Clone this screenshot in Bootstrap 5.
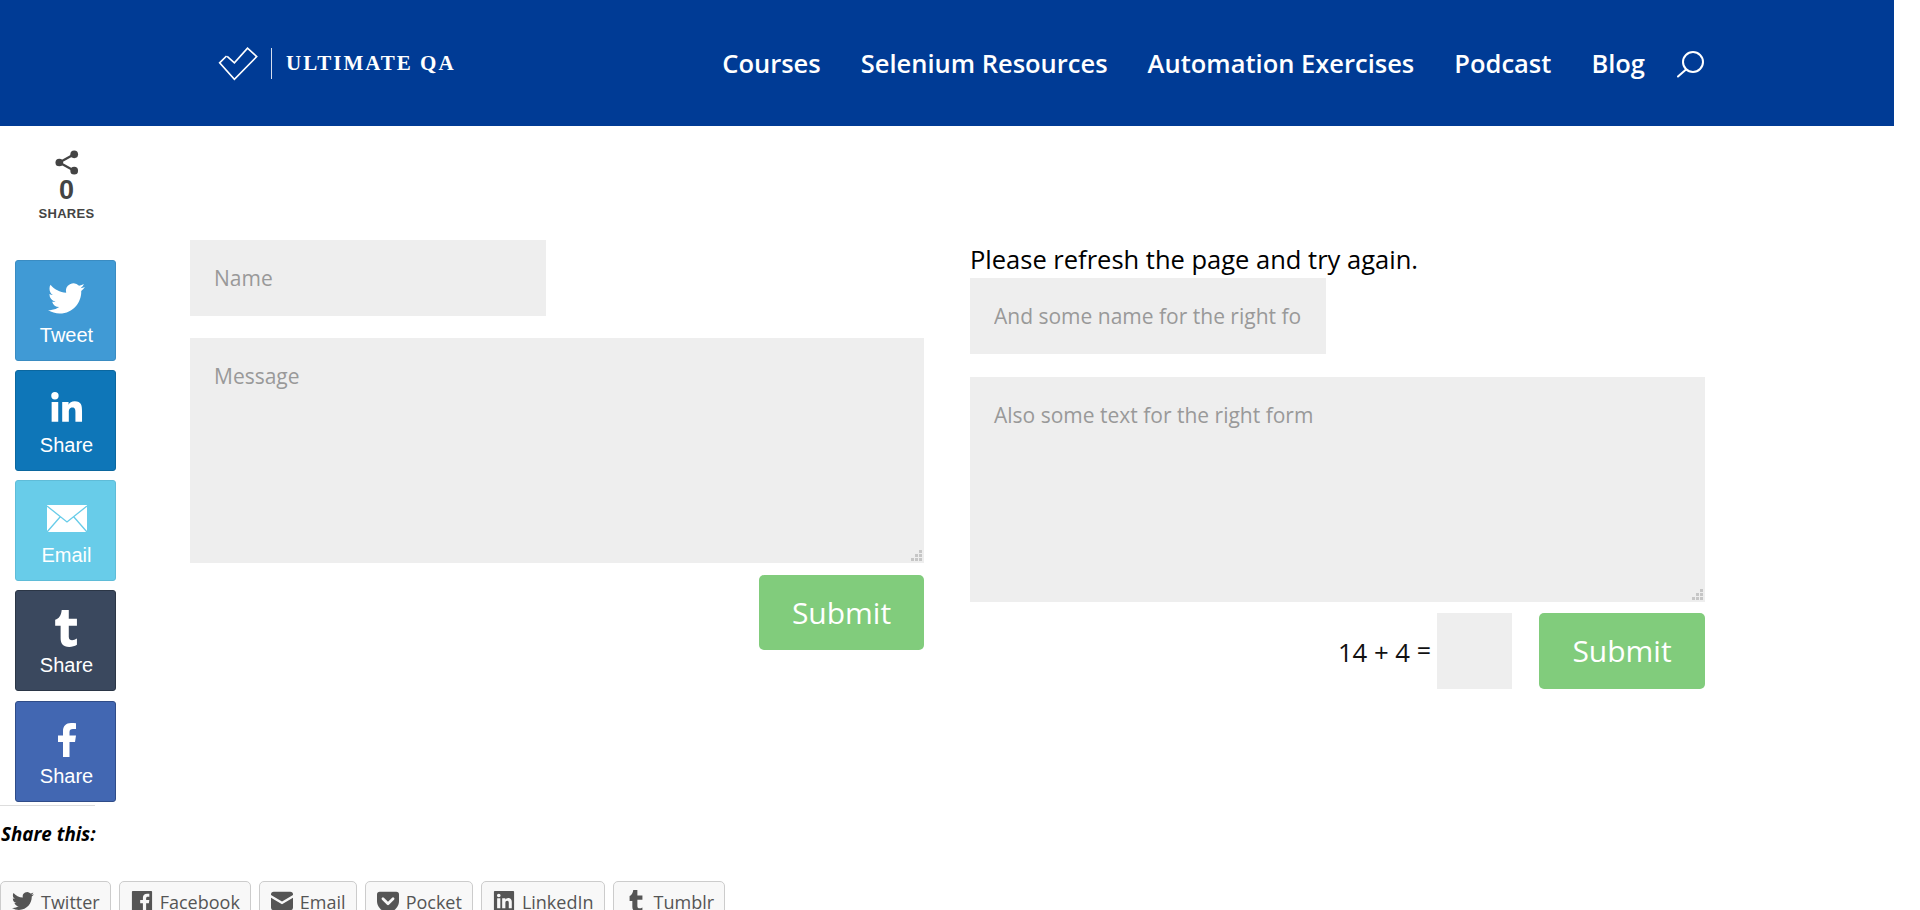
<!DOCTYPE html>
<html lang="en">
<head>
    <meta charset="UTF-8">
    <meta content="width=device-width, initial-scale=1.0" name="viewport">
    <title>Ultimate QA</title>
    <link href="https://cdn.jsdelivr.net/npm/bootstrap@5.3.0/dist/css/bootstrap.min.css" rel="stylesheet">
    <style>
        html, body {
            height: 910px;
            overflow: hidden;
        }
        body {
            background: #fff;
            font-family: "Open Sans", sans-serif;
            color: #000;
        }
        .page-wrap {
            width: 1894px;
        }
        .top-bar {
            height: 126px;
            background: #003b95;
            padding: 0 189px 0 218px;
        }
        .brand-box {
            color: #fff;
            text-decoration: none;
        }
        .brand-rule {
            width: 1px;
            height: 31px;
            background: #d5deee;
            margin: 0 14px 0 13px;
        }
        .brand-name {
            font-family: "Liberation Serif", serif;
            font-weight: 700;
            font-size: 21px;
            letter-spacing: 2px;
            line-height: 1;
        }
        .top-links {
            gap: 40px;
        }
        .top-links a {
            color: #fff;
            font-size: 25.5px;
            font-weight: 600;
            text-decoration: none;
            line-height: 1;
            padding-top: 2px;
        }
        .top-links a.search-link {
            margin-left: -8px;
            padding-top: 0;
        }
        .main-area {
            height: 676px;
        }
        .share-side {
            width: 117px;
            flex: none;
            padding: 24px 0 0 15px;
        }
        .share-total {
            width: 101px;
            height: 110px;
            padding-left: 2px;
            font-family: "Liberation Sans", sans-serif;
            color: #444;
            text-align: center;
            line-height: 1;
        }
        .share-total b {
            display: block;
            font-size: 27px;
            margin-top: 2px;
        }
        .share-total span {
            display: block;
            font-size: 13px;
            font-weight: 700;
            letter-spacing: .3px;
            margin-top: 3px;
        }
        .side-btn {
            width: 101px;
            height: 101px;
            margin-bottom: 9.15px;
            border: 1px solid;
            border-radius: 3px;
            color: #fff;
            font-family: "Liberation Sans", sans-serif;
            font-size: 20px;
            line-height: 1;
            padding: 19px 0 0 2px;
            text-decoration: none;
        }
        .side-btn svg {
            display: block;
            height: 37px;
            margin-bottom: 8px;
        }
        .tw-btn { background: #409ad5; border-color: #3a8cc2; }
        .li-btn { background: #0e76b8; border-color: #0b679f; }
        .em-btn { background: #68cce9; border-color: #5fbcd8; }
        .tu-btn { background: #3a485e; border-color: #2b3646; }
        .fb-btn { background: #4267b2; border-color: #2f4c88; }
        .forms-area {
            padding-left: 73px;
            padding-top: 114px;
            gap: 46px;
        }
        .form-col {
            width: 734px;
        }
        .form-col + .form-col {
            width: 735px;
        }
        .note-line {
            font-size: 25.5px;
            line-height: 38px;
            height: 38px;
            white-space: nowrap;
        }
        .field-short, .field-long, .field-code {
            background: #eee;
            border: 0;
            border-radius: 0;
            color: #999;
            font-size: 21px;
            outline: 0;
            display: block;
        }
        .field-short {
            width: 356px;
            height: 76px;
            padding: 0 24px;
            margin-bottom: 22px;
        }
        .note-line + .field-short {
            margin-bottom: 23px;
        }
        .field-long {
            width: 100%;
            height: 225px;
            padding: 23px 24px;
            margin-bottom: 12px;
            resize: none;
            background-image: url("data:image/svg+xml,%3Csvg xmlns='http://www.w3.org/2000/svg' width='12' height='12' fill='%23c6c6c6'%3E%3Cpath d='M9 0h3v3H9zM5 4h3v3H5zM9 4h3v3H9zM1 8h3v3H1zM5 8h3v3H5zM9 8h3v3H9z'/%3E%3C/svg%3E");
            background-repeat: no-repeat;
            background-position: right 2px bottom 1px;
        }
        .note-line ~ .field-long {
            margin-bottom: 11px;
        }
        .field-code {
            width: 75px;
            height: 76px;
            margin: 0 27px 0 6px;
        }
        .field-short::placeholder, .field-long::placeholder {
            color: #999;
            opacity: 1;
        }
        .send-btn {
            width: 165px;
            height: 75px;
            background: #81cc7c;
            border: 0;
            border-radius: 5px;
            color: #fff;
            font-size: 30px;
            line-height: 1;
        }
        .send-btn:hover {
            background: #81cc7c;
            color: #fff;
        }
        .note-line ~ .d-flex .send-btn {
            width: 166px;
            height: 76px;
        }
        .sum-label {
            font-size: 25.7px;
            color: #111;
            white-space: nowrap;
            padding-top: 4px;
        }
        .sum-label span {
            font-size: 25px;
            position: relative;
            top: -2px;
        }
        .share-foot hr {
            width: 95px;
            margin: 3px 0 0;
            border-color: #ddd;
            opacity: 1;
        }
        .share-foot h3 {
            font-size: 18.8px;
            font-weight: 700;
            font-style: italic;
            margin: 15px 0 0;
            line-height: 27px;
            padding-left: 1px;
        }
        .foot-row {
            gap: 8px;
            margin-top: 33px;
        }
        .foot-btn {
            height: 44px;
            border: 1px solid #ccc;
            border-radius: 5px;
            background: #f8f8f8;
            color: #555;
            font-size: 18px;
            padding: 6px 10px 0 11px;
            text-decoration: none;
            line-height: 28px;
            gap: 7px;
        }
        .foot-btn svg {
            width: 22px;
            height: 22px;
            margin-top: 2px;
            flex: none;
            fill: #555;
        }
    </style>
</head>
<body>
<div class="page-wrap">
    <nav class="top-bar d-flex align-items-center justify-content-between">
        <a class="brand-box d-flex align-items-center" href="#">
            <svg width="40" height="35" viewBox="82 76 122 106" fill="none" stroke="#fff" stroke-width="5">
                <path d="M108 106 L87 127 L132 177 L200 108 L172 82 L132 127 L110 107"/>
            </svg>
            <span class="brand-rule"></span>
            <span class="brand-name">ULTIMATE QA</span>
        </a>
        <div class="top-links d-flex align-items-center">
            <a href="#">Courses</a>
            <a href="#">Selenium Resources</a>
            <a href="#">Automation Exercises</a>
            <a href="#">Podcast</a>
            <a href="#">Blog</a>
            <a class="search-link" href="#" aria-label="Search">
                <svg class="d-block" width="28" height="30" viewBox="0 0 28 30" fill="none" stroke="#fff" stroke-width="2" stroke-linecap="round">
                    <circle cx="16" cy="14" r="10"/>
                    <path d="M9 21.500 L1 28.500"/>
                </svg>
            </a>
        </div>
    </nav>

    <div class="main-area d-flex">
        <aside class="share-side">
            <div class="share-total">
                <svg width="26" height="25" viewBox="0 0 26 26" fill="#444" class="d-block mx-auto">
                    <circle cx="20.500" cy="4.500" r="4"/>
                    <circle cx="5" cy="13" r="4"/>
                    <circle cx="20.500" cy="21.500" r="4"/>
                    <path d="M5 13 L20.500 4.500 M5 13 L20.500 21.500" stroke="#444" stroke-width="2.400"/>
                </svg>
                <b>0</b>
                <span>SHARES</span>
            </div>
            <a class="side-btn tw-btn d-block text-center" href="#">
                <svg viewBox="0 0 24 24" class="mx-auto" fill="#fff"><path d="M23.950 4.570a10 10 0 0 1-2.820.770 4.960 4.960 0 0 0 2.160-2.720c-.950.550-2 .950-3.130 1.180a4.920 4.920 0 0 0-8.380 4.480C7.690 8.100 4.070 6.130 1.640 3.160a4.820 4.820 0 0 0-.670 2.480c0 1.710.870 3.210 2.190 4.100a4.900 4.900 0 0 1-2.230-.620v.060a4.920 4.920 0 0 0 3.950 4.830 5 5 0 0 1-2.210.080 4.940 4.940 0 0 0 4.600 3.420A9.870 9.870 0 0 1 0 19.540a14 14 0 0 0 7.560 2.210c9.050 0 14-7.500 14-13.980 0-.210 0-.420-.020-.630a9.940 9.940 0 0 0 2.410-2.570z"/></svg>
                Tweet
            </a>
            <a class="side-btn li-btn d-block text-center" href="#">
                <svg viewBox="-1.250 -0.500 28 28" class="mx-auto" fill="#fff"><path d="M1.500 8.500h5v15h-5zM4 1a2.800 2.800 0 1 1 0 5.600A2.800 2.800 0 0 1 4 1zM9.500 8.500h4.800v2.100c.7-1.300 2.300-2.500 4.700-2.500 5 0 5.500 3.300 5.500 7.500v7.900h-5v-7c0-1.700 0-3.800-2.300-3.800s-2.700 1.800-2.700 3.700v7.100h-5z"/></svg>
                Share
            </a>
            <a class="side-btn em-btn d-block text-center" href="#">
                <svg viewBox="-7 -5 54 37" class="mx-auto">
                    <rect width="40" height="27" fill="#fff"/>
                    <path d="M0 1 L20 17 L40 1 M0 27 L13.500 11.500 M40 27 L26.500 11.500" fill="none" stroke="#68cce9" stroke-width="1.300"/>
                </svg>
                Email
            </a>
            <a class="side-btn tu-btn d-block text-center" href="#">
                <svg viewBox="0 0 24 34" class="mx-auto" fill="#fff"><path d="M8 0h6.500v8H22v6.500h-7.500v10c0 2.500 1.500 3.200 3 3.200 1.500 0 3-.5 4.500-1.400V32c-2 1.300-4.500 2-7 2-6 0-8-3.500-8-8V14.500H2V9c3.500-1 5.500-4 6-9z"/></svg>
                Share
            </a>
            <a class="side-btn fb-btn d-block text-center" href="#">
                <svg viewBox="0 -2 20 37" class="mx-auto" fill="#fff"><path d="M6 34V19H1v-6.500h5V8c0-5 3-8 8-8 2 0 3.500.1 5 .3V6h-3c-2.500 0-3.500 1-3.500 3.200v3.300H19L18 19h-5.500v15z"/></svg>
                Share
            </a>
        </aside>

        <div class="forms-area d-flex flex-grow-1">
            <form class="form-col" onsubmit="return false">
                <input class="field-short" type="text" placeholder="Name">
                <textarea class="field-long" placeholder="Message"></textarea>
                <div class="d-flex justify-content-end">
                    <button class="btn send-btn">Submit</button>
                </div>
            </form>
            <form class="form-col" onsubmit="return false">
                <div class="note-line">Please refresh the page and try again.</div>
                <input class="field-short" type="text" placeholder="And some name for the right form">
                <textarea class="field-long" placeholder="Also some text for the right form"></textarea>
                <div class="d-flex justify-content-end align-items-center">
                    <span class="sum-label">14 + 4 <span>=</span></span>
                    <input class="field-code" type="text">
                    <button class="btn send-btn">Submit</button>
                </div>
            </form>
        </div>
    </div>

    <section class="share-foot">
        <hr>
        <h3>Share this:</h3>
        <div class="foot-row d-flex">
            <a class="foot-btn d-flex" href="#">
                <svg viewBox="0 0 24 24"><path d="M23.950 4.570a10 10 0 0 1-2.820.770 4.960 4.960 0 0 0 2.160-2.720c-.950.550-2 .950-3.130 1.180a4.920 4.920 0 0 0-8.380 4.480C7.690 8.100 4.070 6.130 1.640 3.160a4.820 4.820 0 0 0-.670 2.480c0 1.710.870 3.210 2.190 4.100a4.900 4.900 0 0 1-2.230-.620v.060a4.920 4.920 0 0 0 3.950 4.830 5 5 0 0 1-2.210.080 4.940 4.940 0 0 0 4.600 3.420A9.870 9.870 0 0 1 0 19.540a14 14 0 0 0 7.560 2.210c9.050 0 14-7.500 14-13.980 0-.210 0-.420-.020-.630a9.940 9.940 0 0 0 2.410-2.570z"/></svg>
                Twitter
            </a>
            <a class="foot-btn d-flex" href="#">
                <svg viewBox="0 0 24 24"><path d="M2 1h20a1 1 0 0 1 1 1v20a1 1 0 0 1-1 1h-5.500v-8.500h3l.5-3.500h-3.500V9c0-1 .5-1.700 1.800-1.700H20V4.200c-.5-.1-1.500-.2-2.500-.2-2.700 0-4.500 1.600-4.500 4.500V11h-3v3.500h3V23H2a1 1 0 0 1-1-1V2a1 1 0 0 1 1-1z"/></svg>
                Facebook
            </a>
            <a class="foot-btn d-flex" href="#">
                <svg viewBox="0 0 24 24"><path d="M3 2h18a3 3 0 0 1 3 3v.500L12 12.500 0 5.500V5a3 3 0 0 1 3-3z"/><path d="M0 8.500l12 7 12-7V19a3 3 0 0 1-3 3H3a3 3 0 0 1-3-3z"/></svg>
                Email
            </a>
            <a class="foot-btn d-flex" href="#">
                <svg viewBox="0 0 24 24"><path d="M3 2h18a3 3 0 0 1 3 3v7a12 12 0 0 1-24 0V5a3 3 0 0 1 3-3z"/><path d="M6.500 9.500L12 15l5.500-5.500" fill="none" stroke="#f8f8f8" stroke-width="3" stroke-linecap="round" stroke-linejoin="round"/></svg>
                Pocket
            </a>
            <a class="foot-btn d-flex" href="#">
                <svg viewBox="0 0 24 24"><path fill-rule="evenodd" d="M2 1h20a1 1 0 0 1 1 1v20a1 1 0 0 1-1 1H2a1 1 0 0 1-1-1V2a1 1 0 0 1 1-1zm2.500 8v11H8V9zM6.300 4a2 2 0 1 0 0 4 2 2 0 0 0 0-4zM10 9v11h3.500v-6c0-1.500.7-2.400 2-2.400s1.700 1 1.700 2.400v6h3.300v-6.800c0-2.800-1.500-4.400-3.800-4.400-1.500 0-2.600.8-3.200 1.700V9z"/></svg>
                LinkedIn
            </a>
            <a class="foot-btn d-flex" href="#">
                <svg viewBox="0 0 24 24"><path d="M9 0h4.500v6H19v4.500h-5.500v7c0 2 1 2.500 2.200 2.500 1 0 2.200-.4 3.300-1v4c-1.400.7-3 1-4.700 1-4.300 0-6.300-2.300-6.300-5.500v-6.500H5V6.500C7.200 5.800 8.700 3 9 0z"/></svg>
                Tumblr
            </a>
        </div>
    </section>
</div>
<script src="https://cdn.jsdelivr.net/npm/bootstrap@5.3.0/dist/js/bootstrap.bundle.min.js"></script>
</body>
</html>
